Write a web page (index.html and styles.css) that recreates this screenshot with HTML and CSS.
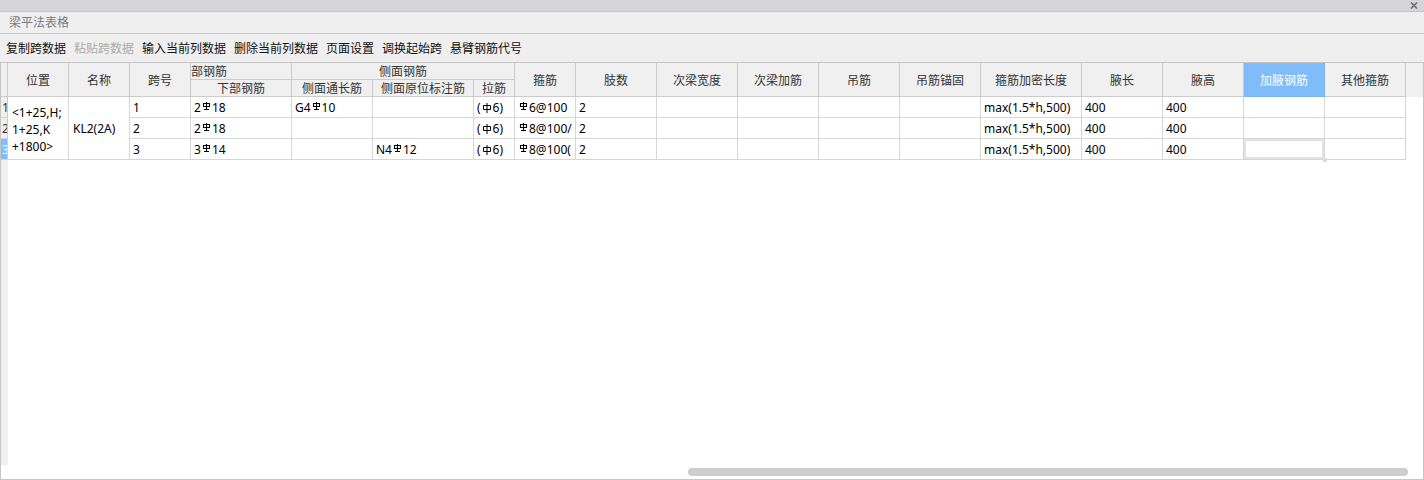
FILE: index.html
```html
<!DOCTYPE html>
<html lang="zh">
<head>
    <meta charset="UTF-8">
    <title>梁平法表格</title>
    <link rel="stylesheet" href="styles.css">
</head>
<body>
<div class="window">
    <div class="topbar">
        <svg class="close" width="8" height="7" viewBox="0 0 8 7"><path d="M1 0.5L7 6.5M7 0.5L1 6.5" stroke="#6e6e6e" stroke-width="1.6"/></svg>
    </div>
    <div class="titlebar">梁平法表格</div>

    <!-- 工具栏 -->
    <div class="toolbar">
        <span>复制跨数据</span>
        <span class="disabled">粘贴跨数据</span>
        <span>输入当前列数据</span>
        <span>删除当前列数据</span>
        <span>页面设置</span>
        <span>调换起始跨</span>
        <span>悬臂钢筋代号</span>
    </div>

    <div class="panel">
        <div class="sheet">
            <!-- 表头 -->
            <div class="hd tall rhc"></div>
            <div class="hd tall">位置</div>
            <div class="hd tall">名称</div>
            <div class="hd tall">跨号</div>
            <div class="hd left">部钢筋</div>
            <div class="hd span3">侧面钢筋</div>
            <div class="hd tall">箍筋</div>
            <div class="hd tall">肢数</div>
            <div class="hd tall">次梁宽度</div>
            <div class="hd tall">次梁加筋</div>
            <div class="hd tall">吊筋</div>
            <div class="hd tall">吊筋锚固</div>
            <div class="hd tall">箍筋加密长度</div>
            <div class="hd tall">腋长</div>
            <div class="hd tall">腋高</div>
            <div class="hd tall active">加腋钢筋</div>
            <div class="hd tall">其他箍筋</div>
            <div class="hd tall fill"></div>
            <div class="hd">下部钢筋</div>
            <div class="hd">侧面通长筋</div>
            <div class="hd">侧面原位标注筋</div>
            <div class="hd">拉筋</div>

            <!-- 第1跨 -->
            <div class="cell rh">1</div>
            <div class="cell merge pos"><span>&lt;1+25,H;<br>1+25,K<br>+1800&gt;</span></div>
            <div class="cell merge">KL2(2A)</div>
            <div class="cell">1</div>
            <div class="cell">2<svg class="g3" width="9" height="8" viewBox="0 0 9 8"><path d="M1.5 1.5h6v3h-6z M4.5 0v7.5 M2 7.5h5" fill="none" stroke="#000" stroke-width="1.1"/></svg>18</div>
            <div class="cell">G4<svg class="g3" width="9" height="8" viewBox="0 0 9 8"><path d="M1.5 1.5h6v3h-6z M4.5 0v7.5 M2 7.5h5" fill="none" stroke="#000" stroke-width="1.1"/></svg>10</div>
            <div class="cell"></div>
            <div class="cell">(<svg class="g1" width="10" height="10" viewBox="0 0 10 10"><path d="M1.5 2.5h7v4h-7z M5 0v10" fill="none" stroke="#000"/></svg>6)</div>
            <div class="cell"><svg class="g3" width="9" height="8" viewBox="0 0 9 8"><path d="M1.5 1.5h6v3h-6z M4.5 0v7.5 M2 7.5h5" fill="none" stroke="#000" stroke-width="1.1"/></svg>6@100</div>
            <div class="cell">2</div>
            <div class="cell"></div>
            <div class="cell"></div>
            <div class="cell"></div>
            <div class="cell"></div>
            <div class="cell">max(1.5*h,500)</div>
            <div class="cell">400</div>
            <div class="cell">400</div>
            <div class="cell"></div>
            <div class="cell"></div>
            <div class="cell fill"></div>

            <!-- 第2跨 -->
            <div class="cell rh">2</div>
            <div class="cell">2</div>
            <div class="cell">2<svg class="g3" width="9" height="8" viewBox="0 0 9 8"><path d="M1.5 1.5h6v3h-6z M4.5 0v7.5 M2 7.5h5" fill="none" stroke="#000" stroke-width="1.1"/></svg>18</div>
            <div class="cell"></div>
            <div class="cell"></div>
            <div class="cell">(<svg class="g1" width="10" height="10" viewBox="0 0 10 10"><path d="M1.5 2.5h7v4h-7z M5 0v10" fill="none" stroke="#000"/></svg>6)</div>
            <div class="cell"><svg class="g3" width="9" height="8" viewBox="0 0 9 8"><path d="M1.5 1.5h6v3h-6z M4.5 0v7.5 M2 7.5h5" fill="none" stroke="#000" stroke-width="1.1"/></svg>8@100/</div>
            <div class="cell">2</div>
            <div class="cell"></div>
            <div class="cell"></div>
            <div class="cell"></div>
            <div class="cell"></div>
            <div class="cell">max(1.5*h,500)</div>
            <div class="cell">400</div>
            <div class="cell">400</div>
            <div class="cell"></div>
            <div class="cell"></div>
            <div class="cell fill"></div>

            <!-- 第3跨 -->
            <div class="cell rh sel">3</div>
            <div class="cell">3</div>
            <div class="cell">3<svg class="g3" width="9" height="8" viewBox="0 0 9 8"><path d="M1.5 1.5h6v3h-6z M4.5 0v7.5 M2 7.5h5" fill="none" stroke="#000" stroke-width="1.1"/></svg>14</div>
            <div class="cell"></div>
            <div class="cell">N4<svg class="g3" width="9" height="8" viewBox="0 0 9 8"><path d="M1.5 1.5h6v3h-6z M4.5 0v7.5 M2 7.5h5" fill="none" stroke="#000" stroke-width="1.1"/></svg>12</div>
            <div class="cell">(<svg class="g1" width="10" height="10" viewBox="0 0 10 10"><path d="M1.5 2.5h7v4h-7z M5 0v10" fill="none" stroke="#000"/></svg>6)</div>
            <div class="cell"><svg class="g3" width="9" height="8" viewBox="0 0 9 8"><path d="M1.5 1.5h6v3h-6z M4.5 0v7.5 M2 7.5h5" fill="none" stroke="#000" stroke-width="1.1"/></svg>8@100(</div>
            <div class="cell">2</div>
            <div class="cell"></div>
            <div class="cell"></div>
            <div class="cell"></div>
            <div class="cell"></div>
            <div class="cell">max(1.5*h,500)</div>
            <div class="cell">400</div>
            <div class="cell">400</div>
            <div class="cell focus"></div>
            <div class="cell"></div>
            <div class="cell fill"></div>
        </div>

        <div class="rest">
            <div class="rest-rh"></div>
        </div>

        <!-- 横向滚动条 -->
        <div class="hscroll">
            <div class="thumb"></div>
        </div>
    </div>
</div>
</body>
</html>
```

FILE: styles.css
```css
body {
    margin: 0;
    font-family: "Noto Sans", "Noto Sans CJK SC", sans-serif;
    font-size: 12px;
    color: #000;
    background: #fff;
}

.window {
    width: 1424px;
    height: 480px;
    display: flex;
    flex-direction: column;
}

/* 窗口顶部 */
.topbar {
    height: 11px;
    background: #d6d6da;
    border-bottom: 1px solid #c3c3ca;
    display: flex;
    justify-content: flex-end;
    align-items: center;
    padding-right: 6px;
}

.titlebar {
    height: 21px;
    line-height: 21px;
    background: #efefef;
    border-bottom: 1px solid #c8c8c8;
    color: #7a7a7a;
    padding-left: 9px;
}

.toolbar {
    height: 28px;
    background: #efefef;
    display: flex;
    align-items: center;
    gap: 8px;
    padding-left: 6px;
    color: #111;
}

.toolbar .disabled {
    color: #ababab;
}

/* 表格区域 */
.panel {
    flex: 1;
    display: flex;
    flex-direction: column;
    border: 1px solid #c6c6c6;
    background: #fff;
}

.sheet {
    display: grid;
    grid-template-columns: 7px 61px 61px 61px 101px 81px 101px 41px 61px repeat(5, 81px) 101px repeat(4, 81px) 1fr;
    grid-template-rows: 17px 17px repeat(3, 21px);
}

.hd {
    box-sizing: border-box;
    background: #f0f0f0;
    border-right: 1px solid #cbcbcb;
    border-bottom: 1px solid #cbcbcb;
    color: #333;
    display: flex;
    align-items: center;
    justify-content: center;
    white-space: nowrap;
    overflow: hidden;
}

.hd.tall {
    grid-row: span 2;
}

.hd.span3 {
    grid-column: span 3;
}

.hd.left {
    justify-content: flex-start;
}

.hd.active {
    background: #80bcf9;
    border-color: #78b4f2;
    color: #fff;
}

.hd.fill {
    border: none;
}

.cell {
    box-sizing: border-box;
    border-right: 1px solid #d6d6d6;
    border-bottom: 1px solid #d6d6d6;
    line-height: 21px;
    padding-left: 3px;
    white-space: nowrap;
    overflow: hidden;
}

.cell.merge {
    grid-row: span 3;
    padding-left: 4px;
    padding-top: 1px;
    display: flex;
    align-items: center;
}

.cell.pos {
    line-height: 17px;
    padding-top: 2px;
}

.cell.rh {
    background: #f0f0f0;
    border-right-color: #cbcbcb;
    padding-left: 1px;
    color: #333;
}

.cell.rh.sel {
    background: #80bcf9;
    color: #fff;
}

.cell.fill {
    border: none;
}

.cell.focus {
    position: relative;
    overflow: visible;
    box-shadow: inset 0 0 0 2px #e3e3e3;
}

.cell.focus::after {
    content: "";
    position: absolute;
    right: -3px;
    bottom: -3px;
    width: 4px;
    height: 4px;
    background: #dcdcdc;
}

/* 钢筋符号 */
.g3 {
    margin: 0 1px;
    vertical-align: 2px;
}

.g1 {
    margin: 0 1px;
    vertical-align: -1px;
}

.rest {
    flex: 1;
    display: flex;
}

.rest-rh {
    width: 7px;
    background: #f0f0f0;
}

.hscroll {
    height: 14px;
    box-sizing: border-box;
    padding: 3px 0 0 687px;
}

.thumb {
    width: 720px;
    height: 8px;
    border-radius: 4px;
    background: #cdcdcd;
}
```
